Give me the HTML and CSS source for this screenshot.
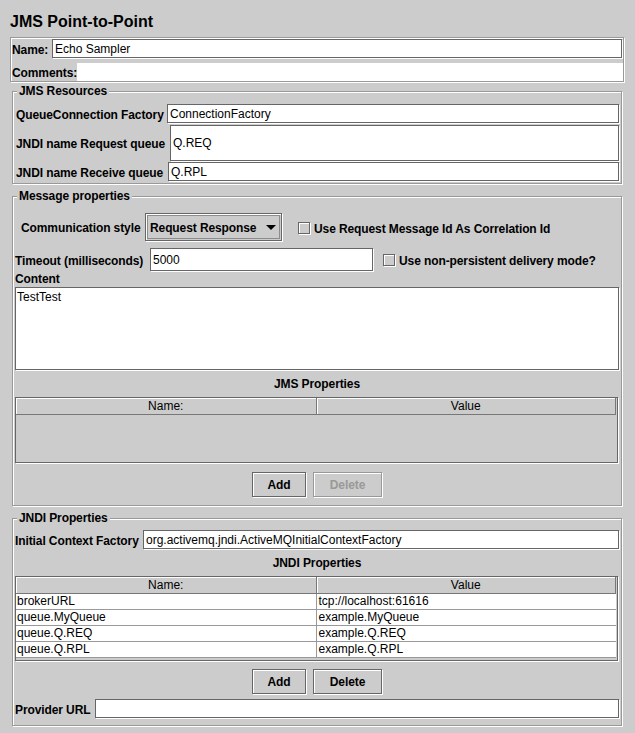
FILE: index.html
```html
<!DOCTYPE html>
<html>
<head>
<meta charset="utf-8">
<title>JMS Point-to-Point</title>
<link rel="stylesheet" href="styles.css">
</head>
<body>
<div class="page">
  <h1 class="title">JMS Point-to-Point</h1>

  <div class="name-panel">
    <div class="np-row np-row1">
      <span class="lbl w-name">Name:</span>
      <div class="field">Echo Sampler</div>
    </div>
    <div class="np-row np-row2">
      <span class="lbl w-comments">Comments:</span>
      <div class="comments"></div>
    </div>
  </div>

  <fieldset class="group g-res">
    <legend>JMS Resources</legend>
    <div class="row r-qcf"><span class="lbl w-qcf">QueueConnection Factory</span><div class="field">ConnectionFactory</div></div>
    <div class="row r-req"><span class="lbl w-req">JNDI name Request queue</span><div class="field tall">Q.REQ</div></div>
    <div class="row r-rec"><span class="lbl w-rec">JNDI name Receive queue</span><div class="field">Q.RPL</div></div>
  </fieldset>

  <fieldset class="group g-msg">
    <legend>Message properties</legend>
    <div class="row r-comm">
      <span class="lbl w-comm">Communication style</span>
      <div class="combo">
        <div class="combo-in">
          <span class="lbl">Request Response</span>
          <svg class="arrow" width="10" height="5" viewBox="0 0 10 5"><polygon points="0,0 10,0 5,5" fill="#000"/></svg>
        </div>
      </div>
      <div class="check check-1"><span class="cb"></span><span class="lbl">Use Request Message Id As Correlation Id</span></div>
    </div>
    <div class="row r-timeout">
      <span class="lbl w-timeout">Timeout (milliseconds)</span>
      <div class="field f-timeout">5000</div>
      <div class="check check-2"><span class="cb"></span><span class="lbl">Use non-persistent delivery mode?</span></div>
    </div>
    <div class="lbl content-lbl">Content</div>
    <div class="textarea">TestTest</div>
    <div class="lbl subtitle">JMS Properties</div>
    <div class="tbl tbl-jms">
      <table>
        <thead><tr><th class="c1">Name:</th><th class="c2">Value</th></tr></thead>
        <tbody></tbody>
      </table>
    </div>
    <div class="btns">
      <div class="btn btn-add">Add</div>
      <div class="btn btn-del disabled">Delete</div>
    </div>
  </fieldset>

  <fieldset class="group g-jndi">
    <legend>JNDI Properties</legend>
    <div class="row r-icf">
      <span class="lbl w-icf">Initial Context Factory</span>
      <div class="field">org.activemq.jndi.ActiveMQInitialContextFactory</div>
    </div>
    <div class="lbl subtitle">JNDI Properties</div>
    <div class="tbl tbl-jndi">
      <table>
        <thead><tr><th class="c1">Name:</th><th class="c2">Value</th></tr></thead>
        <tbody>
          <tr><td class="c1">brokerURL</td><td class="c2">tcp://localhost:61616</td></tr>
          <tr><td class="c1">queue.MyQueue</td><td class="c2">example.MyQueue</td></tr>
          <tr><td class="c1">queue.Q.REQ</td><td class="c2">example.Q.REQ</td></tr>
          <tr><td class="c1">queue.Q.RPL</td><td class="c2">example.Q.RPL</td></tr>
        </tbody>
      </table>
    </div>
    <div class="btns btns-jndi">
      <div class="btn btn-add">Add</div>
      <div class="btn btn-del">Delete</div>
    </div>
    <div class="row r-url">
      <span class="lbl w-url">Provider URL</span>
      <div class="field"></div>
    </div>
  </fieldset>
</div>
</body>
</html>
```

FILE: styles.css
```css
* { box-sizing: border-box; }
html, body { margin: 0; background: #cccccc; }
body {
  font-family: "Liberation Sans", Arial, sans-serif;
  font-size: 12px;
  line-height: 14px;
  color: #000;
  min-height: 733px;
}
.page {
  width: 635px;
  padding: 0 11px 0 10px;
}
.title {
  margin: 0;
  padding-top: 12px;
  height: 32px;
  font-size: 16px;
  line-height: 20px;
  font-weight: bold;
}
.lbl {
  font-weight: bold;
  white-space: nowrap;
  flex: none;
  letter-spacing: -0.1px;
  padding-top: 2px;
}

/* text fields (Metal flush 3D border) */
.field {
  flex: 1;
  min-width: 0;
  height: 19px;
  background: #fff;
  border: 1px solid #666;
  box-shadow: 1px 1px 0 #fff;
  padding: 1px 2px 0;
  line-height: 17px;
  white-space: nowrap;
  overflow: hidden;
}
.field.tall { height: 36px; line-height: 33px; }

/* name / comments panel */
.name-panel {
  margin-top: 5px;
  height: 45px;
  border: 1px solid #999;
  box-shadow: inset 1px 1px 0 #fff, 1px 1px 0 #fff;
  padding: 1px 1px 0 1px;
  display: flex;
  flex-direction: column;
  gap: 4px;
}
.np-row { display: flex; align-items: flex-start; }
.np-row1 { height: 20px; }
.np-row1 .lbl { line-height: 18px; }
.np-row2 { height: 18px; }
.np-row2 .lbl { line-height: 16px; }
.w-name { width: 40px; }
.w-comments { width: 65px; }
.comments { flex: 1; height: 18px; background: #fff; margin-right: -1px; }

/* titled groups */
.group {
  margin: 2px 2px 0;
  padding: 0 2px;
  min-width: 0;
  border: 1px solid #999;
  box-shadow: inset 1px 1px 0 #fff, 1px 1px 0 #fff;
}
.group legend {
  margin-left: 2px;
  padding: 0 2px;
  font-weight: bold;
  letter-spacing: -0.1px;
  line-height: 14px;
  background: #ccc;
}
.row { display: flex; align-items: center; }

.g-res { padding: 6px 2px 2px; }
.g-res .row { padding-left: 1px; }
.r-qcf { height: 19px; margin-bottom: 2px; }
.r-req { height: 36px; margin-bottom: 1px; }
.r-rec { height: 19px; }
.w-qcf { width: 151px; }
.w-req { width: 154px; }
.w-rec { width: 152px; }

.g-msg { margin-top: 5px; padding: 5px 2px 8px; }
.r-comm { padding: 5px 0 5px 6px; height: 38px; }
.w-comm { width: 124px; }
.combo {
  width: 137px;
  height: 28px;
  border: 1px solid #666;
  box-shadow: inset 1px 1px 0 #fff, 1px 1px 0 #fff;
  padding: 1px;
  flex: none;
}
.combo-in {
  height: 100%;
  border: 1px solid #8c8c8c;
  display: flex;
  align-items: center;
  justify-content: space-between;
  padding: 0 3px 0 2px;
}
.combo-in .lbl { padding-top: 1px; }
.arrow { display: block; margin-top: 1px; }
.check { display: flex; align-items: center; }
.check .lbl { margin-left: 4px; }
.check-1 { margin-left: 16px; margin-top: 1px; }
.cb {
  width: 12px;
  height: 12px;
  flex: none;
  border: 1px solid #666;
  box-shadow: inset 1px 1px 0 #fff, 1px 1px 0 #fff;
  background: #ccc;
}
.r-timeout { margin-top: 2px; height: 23px; }
.w-timeout { width: 135px; }
.f-timeout { flex: none; width: 223px; height: 23px; line-height: 20px; }
.check-2 { margin-left: 10px; }
.content-lbl { padding-top: 1px; }
.textarea {
  margin-top: 1px;
  height: 83px;
  background: #fff;
  border: 1px solid #666;
  box-shadow: 1px 1px 0 #fff;
  padding: 2px 1px;
}
.subtitle { margin-top: 5px; text-align: center; }

/* tables */
.tbl {
  margin-top: 6px;
  width: 603px;
  border: 1px solid #666;
  box-shadow: 1px 1px 0 #fff;
  background: #ccc;
  overflow: hidden;
}
.tbl-jms { height: 66px; }
.tbl-jndi { height: 85px; }
.tbl table {
  width: 600px;
  border-collapse: collapse;
  table-layout: fixed;
}
.tbl th, .tbl td { padding: 0; font-weight: normal; white-space: nowrap; overflow: hidden; }
.tbl .c1 { width: 300px; }
.tbl th {
  height: 16px;
  line-height: 14px;
  padding-top: 1px;
  text-align: center;
  background: #ccc;
  border-bottom: 1px solid #777;
  border-right: 1px solid #777;
  box-shadow: inset 1px 1px 0 #fff;
}
.tbl td {
  height: 16px;
  line-height: 15px;
  background: #fff;
  border-bottom: 1px solid #999;
}
.tbl td.c1 { border-right: 1px solid #999; padding-left: 1px; }
.tbl td.c2 { padding-left: 2px; }

/* buttons */
.btns {
  margin-top: 9px;
  display: flex;
  justify-content: center;
  gap: 7px;
}
.btns-jndi { margin-top: 8px; }
.btn {
  height: 25px;
  border: 1px solid #666;
  box-shadow: inset 1px 1px 0 #fff, 1px 1px 0 #fff;
  font-weight: bold;
  letter-spacing: -0.1px;
  padding-top: 1px;
  display: flex;
  align-items: center;
  justify-content: center;
}
.btn-add { width: 54px; }
.btn-del { width: 69px; }
.btn.disabled { border-color: #999; color: #999; }

.g-jndi { margin-top: 5px; padding: 5px 2px 7px; }
.r-icf { height: 19px; }
.w-icf { width: 128px; }
.r-url { margin-top: 5px; height: 19px; }
.w-url { width: 80px; }
```
